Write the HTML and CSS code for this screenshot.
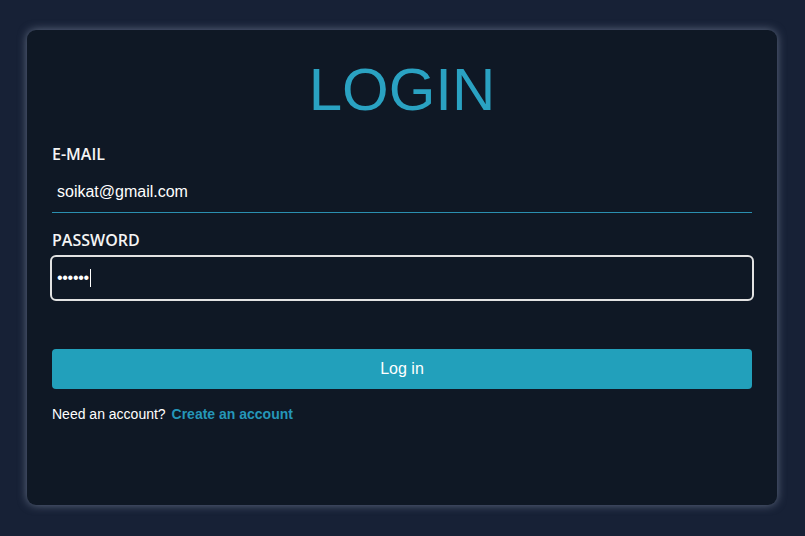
FILE: index.html
```html
<!DOCTYPE html>
<html lang="en">
<head>
<meta charset="utf-8">
<title>Login</title>
<link rel="stylesheet" href="styles.css">
</head>
<body>
<main class="card">
  <h1 class="title">LOGIN</h1>
  <form class="form">
    <div class="field">
      <label class="label">E-MAIL</label>
      <div class="input input-line">soikat@gmail.com</div>
    </div>
    <div class="field field-pass">
      <label class="label">PASSWORD</label>
      <div class="input input-box"><span class="dots">••••••</span><span class="caret"></span></div>
    </div>
    <button type="button" class="btn">Log in</button>
    <p class="note">Need an account? <a class="link">Create an account</a></p>
  </form>
</main>
</body>
</html>
```
FILE: styles.css
```css
html, body {
  margin: 0;
  padding: 0;
}
body {
  background: #172136;
  width: 805px;
  height: 536px;
  overflow: hidden;
  font-family: "Liberation Sans", Arial, sans-serif;
  color: #fff;
}
.card {
  box-sizing: border-box;
  margin: 30px 0 0 27px;
  width: 750px;
  height: 475px;
  padding: 25px 25px;
  background: #0f1825;
  border-radius: 9px;
  box-shadow: 0 0 10px rgba(150, 162, 185, 0.6);
}
.title {
  margin: 0;
  text-align: center;
  font-family: "Liberation Sans", Arial, sans-serif;
  font-weight: 400;
  font-size: 60px;
  line-height: 69px;
  color: #2aa2c2;
}
.form {
  display: flex;
  flex-direction: column;
  margin-top: 19px;
}
.field {
  display: flex;
  flex-direction: column;
}
.field-pass {
  margin-top: 16px;
}
.label {
  font-family: "Open Sans", "Noto Sans", sans-serif;
  font-weight: 600;
  font-size: 16px;
  line-height: 22px;
  color: #f4f4f4;
  margin-bottom: 5px;
}
.input {
  box-sizing: border-box;
  height: 43px;
  padding: 0 5px;
  display: flex;
  align-items: center;
  font-size: 16px;
  color: #fff;
}
.input-line {
  border-bottom: 1px solid #2a8fb0;
  padding-top: 1px;
}
.input-box {
  margin-top: 1px;
  height: 42px;
  border-radius: 4px;
  outline: 2px solid #e2e2e2;
  outline-offset: 0;
}
.dots {
  font-size: 16px;
  letter-spacing: -0.3px;
  color: #fff;
}
.caret {
  display: inline-block;
  width: 1px;
  height: 18px;
  background: #fff;
  margin-left: 1px;
}
.btn {
  margin-top: 50px;
  height: 40px;
  border: none;
  border-radius: 4px;
  background: #22a0bb;
  color: #fff;
  font-family: "Liberation Sans", Arial, sans-serif;
  font-size: 16px;
  padding: 0;
}
.note {
  margin: 17px 0 0;
  font-size: 14px;
  line-height: 16px;
  color: #fff;
}
.link {
  margin-left: 2px;
  font-weight: 700;
  color: #2596b8;
}
```
